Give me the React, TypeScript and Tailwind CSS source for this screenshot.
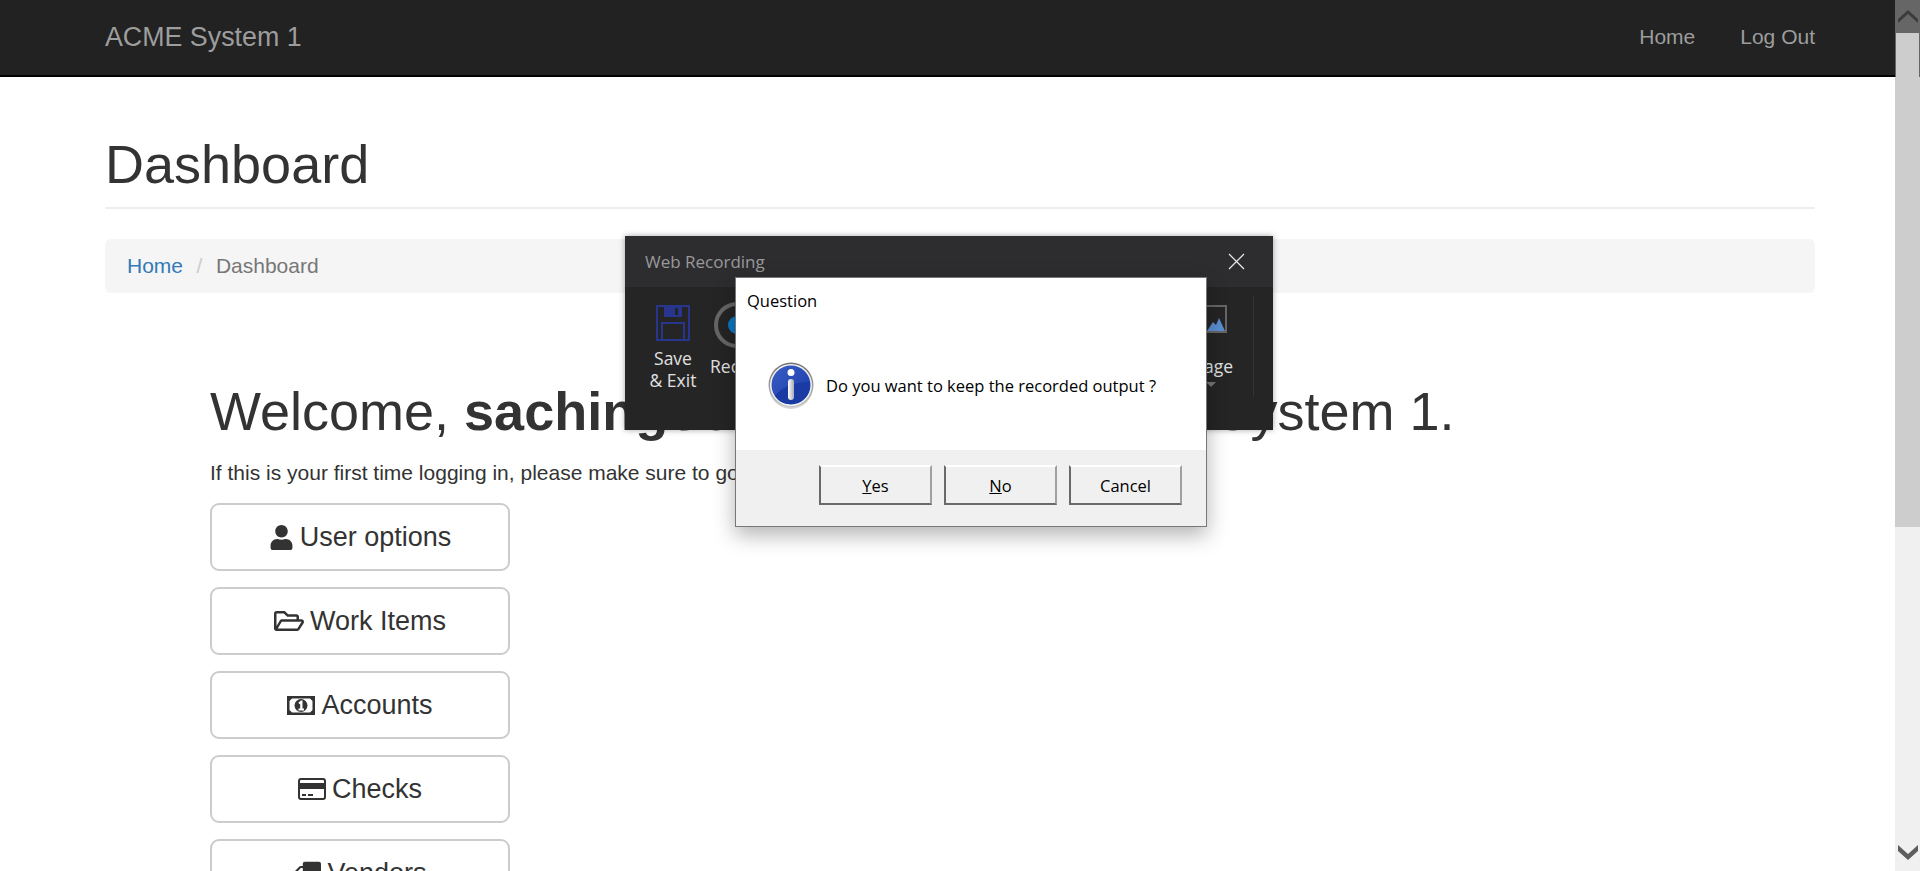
import { FaUser, FaRegFolderOpen, FaTruck } from "react-icons/fa";

function MoneyIcon() {
  return (
    <svg width="28" height="19" viewBox="0 0 28 19" className="shrink-0">
      <path
        fillRule="evenodd"
        fill="#333"
        d="M0 0h28v19H0zM5 2.5 2.5 5v9L5 16.5h18l2.500-2.500V5L23 2.500z"
      />
      <circle cx="14" cy="9.500" r="6.500" fill="#333" />
      <path fill="#fff" d="M11.500 6.500 14 4.500h1.500v8h1.500v2h-5.500v-2h1.700V7.500l-1 .8z" />
    </svg>
  );
}

function CardIcon() {
  return (
    <svg width="28" height="22" viewBox="0 0 28 22" className="shrink-0">
      <rect x="1" y="1" width="26" height="20" rx="2" fill="none" stroke="#333" strokeWidth="2" />
      <rect x="1" y="5" width="26" height="6" fill="#333" />
      <rect x="4" y="16" width="4" height="2" fill="#333" />
      <rect x="10" y="16" width="5" height="2" fill="#333" />
    </svg>
  );
}

function InfoIcon() {
  return (
    <svg width="46" height="48" viewBox="0 0 46 48" className="shrink-0">
      <defs>
        <linearGradient id="rim" x1="0" y1="0" x2="0" y2="1">
          <stop offset="0" stopColor="#707070" />
          <stop offset="1" stopColor="#c8c8c8" />
        </linearGradient>
        <linearGradient id="ball" x1="0" y1="0" x2="1" y2="1">
          <stop offset="0" stopColor="#3a5cc6" />
          <stop offset="1" stopColor="#163aa6" />
        </linearGradient>
        <linearGradient id="stem" x1="0" y1="0" x2="1" y2="0">
          <stop offset="0" stopColor="#ffffff" />
          <stop offset="1" stopColor="#a8acb8" />
        </linearGradient>
      </defs>
      <circle cx="23" cy="25" r="22" fill="#000" opacity="0.15" />
      <circle cx="23" cy="23" r="22.500" fill="url(#rim)" />
      <circle cx="23" cy="23" r="21" fill="#f2f2f2" />
      <circle cx="23" cy="23" r="19.500" fill="url(#ball)" />
      <path d="M7 34Q18 20 42 20Q43 33 32 40 15 46 7 34z" fill="#1a3aa4" />
      <circle cx="23" cy="10.500" r="3.500" fill="#fff" />
      <rect x="20" y="17" width="6" height="21" rx="3" fill="url(#stem)" />
    </svg>
  );
}

function SaveIcon() {
  return (
    <svg width="34" height="36" viewBox="0 0 34 36" fill="none">
      <path d="M1 1h32v34H1z" stroke="#27358f" strokeWidth="2" strokeLinejoin="round" />
      <path d="M8 1h18v11H8z" fill="#27358f" />
      <rect x="19" y="3" width="3" height="7" fill="#252526" />
      <rect x="6" y="18" width="22" height="17" stroke="#27358f" strokeWidth="2" />
    </svg>
  );
}

function NavButton({ icon, label }: { icon: React.ReactNode; label: string }) {
  return (
    <a className="flex h-[68px] w-[300px] items-center justify-center gap-[6px] rounded-[9px] border-2 border-[#ccc] bg-white text-[27px] text-[#333]">
      {icon}
      <span>{label}</span>
    </a>
  );
}

function WinButton({ label, hot }: { label: string; hot?: string }) {
  const rest = hot ? label.slice(hot.length) : label;
  return (
    <button className="h-10 w-[113px] border-t-2 border-r-2 border-b-2 border-l-2 border-t-white border-r-[#a0a0a0] border-b-[#696969] border-l-[#696969] bg-[#f0f0f0] pt-[3px] text-[16.5px] text-black">
      {hot && <span className="underline">{hot}</span>}
      {rest}
    </button>
  );
}

export default function App() {
  const links = [
    { label: "User options", icon: <FaUser size={25} /> },
    { label: "Work Items", icon: <FaRegFolderOpen size={30} /> },
    { label: "Accounts", icon: <MoneyIcon /> },
    { label: "Checks", icon: <CardIcon /> },
    { label: "Vendors", icon: <FaTruck size={28} className="-scale-x-100" /> },
  ];

  return (
    <div className="relative flex h-[871px] w-[1920px] overflow-hidden bg-white font-['Liberation_Sans',Arial,sans-serif] text-[21px] text-[#333]">
      <div className="w-[1895px] shrink-0">
        <nav className="flex h-[77px] items-center justify-between border-b-2 border-black bg-[#222] pr-[80px] pl-[105px] text-[#9d9d9d]">
          <a className="text-[26.8px]">ACME System 1</a>
          <div className="flex gap-[45px] pb-[2px]">
            <a>Home</a>
            <a>Log Out</a>
          </div>
        </nav>

        <main className="pr-[80px] pl-[105px]">
          <div className="border-b-2 border-[#eee] pt-[55px] pb-[11px]">
            <h1 className="text-[54px] leading-[64px]">Dashboard</h1>
          </div>
          <div className="mt-[30px] flex h-[54px] items-center rounded-[6px] bg-[#f5f5f5] px-[22px]">
            <a className="text-[#337ab7]">Home</a>
            <span className="px-[13.5px] text-[#ccc]">/</span>
            <span className="text-[#777]">Dashboard</span>
          </div>

          <div className="pt-[86px] pl-[105px]">
            <h1 className="text-[54px] leading-[64px]">
              Welcome, <b>sachingoel</b>, <span className="ml-[6px]">to the new ACME System 1.</span>
            </h1>
            <p className="mt-[15px] leading-[30px]">
              If this is your first time logging in, please make sure to go to User options.
            </p>
            <div className="mt-[15px] flex flex-col gap-4">
              {links.map((link) => (
                <NavButton key={link.label} icon={link.icon} label={link.label} />
              ))}
            </div>
          </div>
        </main>
      </div>

      {/* scrollbar */}
      <div className="flex w-[25px] shrink-0 flex-col bg-[#f0f0f0]">
        <div className="flex h-[33px] items-center justify-center bg-[#666]">
          <svg width="20" height="13" viewBox="0 0 20 13">
            <path d="M0 9 10 0l10 9v4L10 4 0 13z" fill="#3c3c3c" />
          </svg>
        </div>
        <div className="h-[494px] bg-[#cdcdcd]">
          <div className="h-[44px] border-x border-[#666]" />
        </div>
        <div className="flex flex-1 items-end justify-center pb-[11px]">
          <svg width="20" height="15" viewBox="0 0 20 15">
            <path d="M0 0l10 9 10-9v6L10 15 0 6z" fill="#5d5d5d" />
          </svg>
        </div>
      </div>

      {/* recorder window */}
      <div className="absolute top-[236px] left-[625px] flex h-[194px] w-[648px] flex-col bg-[#252526] font-['Open_Sans',sans-serif] shadow-[0_0_6px_rgba(0,0,0,0.35)]">
        <div className="flex h-[51px] items-center justify-between bg-[#2d2d30] pr-[28px] pl-[20px] text-[17px] text-[#999]">
          <span>Web Recording</span>
          <svg width="17" height="17" viewBox="0 0 17 17" stroke="#e6e6e6" strokeWidth="1.300">
            <path d="M1 1l15 15M16 1 1 16" />
          </svg>
        </div>
        <div className="flex flex-1 text-[17.5px] leading-[22px] text-[#e0e0e0]">
          <div className="flex w-[86px] flex-col items-center pt-[18px] pl-[10px]">
            <SaveIcon />
            <span className="mt-[6px] text-center">
              Save
              <br />& Exit
            </span>
          </div>
          <div className="flex w-[60px] flex-col pt-[15px]">
            <div className="ml-[3px] flex size-[46px] items-center justify-center rounded-full border-[4px] border-[#666]">
              <div className="size-[18px] rounded-full bg-[#0a78c8]" />
            </div>
            <span className="mt-[7px] -ml-px">Record</span>
          </div>
          <div className="flex-1" />
          <div className="mr-[13px] flex w-[60px] flex-col items-end pt-[18px]">
            <div className="relative mr-[6px] h-[28px] w-[34px] border-2 border-[#666]">
              <svg width="18" height="14" viewBox="0 0 18 14" className="absolute right-0 bottom-0">
                <path d="M0 14 6 5l3 3 3-7 6 13z" fill="#5b8fd0" />
              </svg>
            </div>
            <span className="mt-[22px]">Image</span>
            <span className="mt-[5px] mr-[17px] size-0 border-x-[5px] border-t-[5px] border-x-transparent border-t-[#777]" />
          </div>
          <div className="mt-[8px] mb-[33px] ml-[7px] w-px bg-[#333]" />
          <div className="w-[19px]" />
        </div>
      </div>

      {/* confirm dialog */}
      <div className="absolute top-[277px] left-[735px] flex h-[250px] w-[472px] flex-col border border-[#777] bg-white font-['Open_Sans',sans-serif] text-black shadow-[0_8px_20px_rgba(0,0,0,0.3)]">
        <div className="px-[11px] pt-[11px] text-[16.500px] leading-[24px]">Question</div>
        <div className="flex flex-1 items-center gap-[12px] pt-[8px] pl-[32px] text-[16.500px]">
          <InfoIcon />
          <span className="pt-[2px]">Do you want to keep the recorded output ?</span>
        </div>
        <div className="flex h-[76px] justify-end gap-[12px] bg-[#f0f0f0] pt-[15px] pr-[24px]">
          <WinButton label="Yes" hot="Y" />
          <WinButton label="No" hot="N" />
          <WinButton label="Cancel" />
        </div>
      </div>
    </div>
  );
}
